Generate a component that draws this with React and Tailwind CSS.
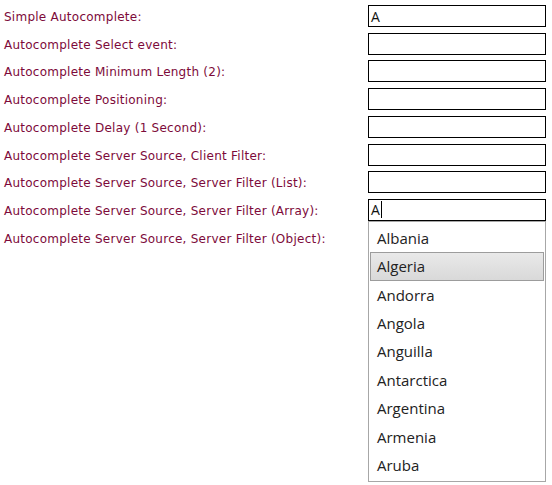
import React from 'react';

const fields = [
  { label: 'Simple Autocomplete:', value: 'A' },
  { label: 'Autocomplete Select event:' },
  { label: 'Autocomplete Minimum Length (2):' },
  { label: 'Autocomplete Positioning:' },
  { label: 'Autocomplete Delay (1 Second):' },
  { label: 'Autocomplete Server Source, Client Filter:' },
  { label: 'Autocomplete Server Source, Server Filter (List):' },
  { label: 'Autocomplete Server Source, Server Filter (Array):', value: 'A', focused: true },
  { label: 'Autocomplete Server Source, Server Filter (Object):', noInput: true },
];

const countries = [
  'Albania', 'Algeria', 'Andorra', 'Angola', 'Anguilla',
  'Antarctica', 'Argentina', 'Armenia', 'Aruba',
];

const Suggestions = ({ items, active }) => (
  <ul className="absolute left-0 top-full z-10 w-[178px] border border-[#a7a7a7] bg-white py-[2px] font-['Open_Sans',sans-serif] text-[15px] text-[#222]">
    {items.map((name, i) => (
      <li
        key={name}
        className={
          i === active
            ? 'mx-px flex h-[28.4px] items-center border border-[#9c9c9c] bg-gradient-to-b from-[#e9e9e9] to-[#d9d9d9] pl-[6px]'
            : 'flex h-[28.4px] items-center pl-2'
        }
      >
        {name}
      </li>
    ))}
  </ul>
);

const Field = ({ label, value, focused, noInput, children }) => (
  <div className="flex h-[27.71px] items-start">
    <label className="w-[368px] shrink-0 pl-1 pt-[3px] font-['DejaVu_Sans',Verdana,sans-serif] text-[12px] tracking-[0.25px] text-[#7d0a3a]">
      {label}
    </label>
    {!noInput && (
      <div className="relative">
        <div className="flex h-[22px] w-[178px] items-center border border-black bg-white pl-[2px] font-['Open_Sans',sans-serif] text-[14px] text-[#111]">
          {value}
          {focused && <span className="ml-px h-[17px] w-px bg-black" />}
        </div>
        {children}
      </div>
    )}
  </div>
);

export default function App() {
  return (
    <div className="h-[485px] w-[552px] overflow-hidden bg-white pt-[5px]">
      {fields.map((f) => (
        <Field key={f.label} {...f}>
          {f.focused && <Suggestions items={countries} active={1} />}
        </Field>
      ))}
    </div>
  );
}
